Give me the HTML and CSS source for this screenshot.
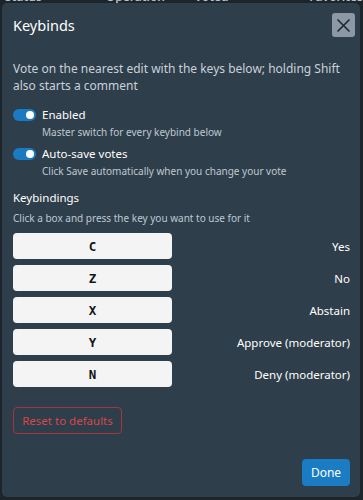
FILE: index.html
```html
<!DOCTYPE html>
<html>
<head>
<meta charset="utf-8">
<link rel="stylesheet" href="styles.css">
</head>
<body>
<div class="page">
  <div class="table-head">
    <span class="th th-status">Status</span>
    <span class="th th-op">Operation</span>
    <span class="th th-voted">Voted</span>
    <span class="th th-fav">Favorites</span>
  </div>
</div>
<div class="dialog">
  <div class="dlg-head">
    <h2 class="dlg-title">Keybinds</h2>
    <button class="close-btn" aria-label="Close">
      <svg width="15" height="15" viewBox="0 0 15 15"><path d="M1.5 1.5 L13.5 13.5 M13.5 1.5 L1.5 13.5" stroke="#1f2830" stroke-width="1.6" fill="none"/></svg>
    </button>
  </div>
  <p class="desc">Vote on the nearest edit with the keys below; holding Shift also starts a comment</p>
  <div class="toggle-row">
    <span class="toggle"><span class="knob"></span></span>
    <div class="toggle-text">
      <div class="toggle-label">Enabled</div>
      <div class="toggle-sub">Master switch for every keybind below</div>
    </div>
  </div>
  <div class="toggle-row second">
    <span class="toggle"><span class="knob"></span></span>
    <div class="toggle-text">
      <div class="toggle-label">Auto-save votes</div>
      <div class="toggle-sub">Click Save automatically when you change your vote</div>
    </div>
  </div>
  <div class="section-title">Keybindings</div>
  <div class="section-sub">Click a box and press the key you want to use for it</div>
  <div class="keys">
    <div class="key-row"><div class="key-box">C</div><span class="key-label">Yes</span></div>
    <div class="key-row"><div class="key-box">Z</div><span class="key-label">No</span></div>
    <div class="key-row"><div class="key-box">X</div><span class="key-label">Abstain</span></div>
    <div class="key-row"><div class="key-box">Y</div><span class="key-label">Approve (moderator)</span></div>
    <div class="key-row"><div class="key-box">N</div><span class="key-label">Deny (moderator)</span></div>
  </div>
  <div class="reset-wrap"><button class="reset-btn">Reset to defaults</button></div>
  <div class="footer"><button class="done-btn">Done</button></div>
</div>
</body>
</html>
```
FILE: styles.css
```css
* { box-sizing: border-box; }
html, body {
  margin: 0;
  padding: 0;
  width: 363px;
  height: 500px;
  overflow: hidden;
  background: #1c242c;
  font-family: "Noto Sans", "Open Sans", sans-serif;
}
.page { position: relative; height: 500px; }
.table-head {
  display: flex;
  margin-top: -11px;
  height: 16px;
  font-size: 12px;
  line-height: 16px;
  color: #b8c0c8;
  font-weight: 600;
}
.th-status { margin-left: 5px; width: 101px; }
.th-op { width: 89px; }
.th-voted { width: 115px; }

.dialog {
  position: absolute;
  left: 2px;
  top: 3px;
  width: 358px;
  height: 494px;
  background: #2f3e4b;
  border-radius: 5px;
  padding: 10px 10px 11px 11px;
  display: flex;
  flex-direction: column;
  color: #ffffff;
}
.dlg-head {
  display: flex;
  justify-content: space-between;
  align-items: center;
  height: 24px;
}
.dlg-title {
  margin: 0;
  font-size: 14.5px;
  font-weight: 400;
  line-height: 24px;
  color: #ffffff;
}
.close-btn {
  width: 23px;
  height: 24px;
  margin-right: -5px;
  padding: 0;
  border: none;
  border-radius: 3px;
  background: #8c98a4;
  display: flex;
  align-items: center;
  justify-content: center;
}
.desc {
  margin: 23px 0 0 0;
  font-size: 12px;
  line-height: 17px;
  color: #c9d1d9;
}
.toggle-row {
  display: flex;
  align-items: flex-start;
  margin-top: 12px;
}
.toggle-row.second { margin-top: 5px; }
.toggle {
  width: 23px;
  height: 12px;
  border-radius: 6px;
  background: #1b7bc2;
  margin-top: 3px;
  margin-right: 6px;
  display: flex;
  align-items: center;
  justify-content: flex-end;
  padding-right: 2px;
  flex-shrink: 0;
}
.knob {
  width: 8px;
  height: 8px;
  border-radius: 50%;
  background: #ffffff;
}
.toggle-label {
  font-size: 11.5px;
  line-height: 18px;
  color: #ffffff;
}
.toggle-sub {
  font-size: 10px;
  line-height: 16px;
  color: #bfc8d0;
}
.section-title {
  margin-top: 10px;
  font-size: 11.5px;
  line-height: 18px;
  color: #ffffff;
}
.section-sub {
  margin-top: 3px;
  font-size: 10px;
  line-height: 16px;
  color: #bfc8d0;
}
.keys {
  margin-top: 7px;
  display: flex;
  flex-direction: column;
  gap: 6px;
}
.key-row {
  display: flex;
  align-items: center;
  justify-content: space-between;
}
.key-box {
  width: 159px;
  height: 26px;
  border-radius: 4px;
  background: #f4f4f4;
  color: #141414;
  font-family: "DejaVu Sans Mono", monospace;
  font-weight: 700;
  font-size: 12.5px;
  display: flex;
  align-items: center;
  justify-content: center;
}
.key-label {
  font-size: 11.5px;
  color: #ffffff;
}
.reset-wrap { margin-top: 20px; }
.reset-btn {
  height: 27px;
  width: 109px;
  border: 1px solid #a8333c;
  border-radius: 4px;
  background: transparent;
  color: #d8464c;
  font-family: "Noto Sans", sans-serif;
  font-size: 11.5px;
  padding: 0;
}
.footer {
  margin-top: auto;
  display: flex;
  justify-content: flex-end;
}
.done-btn {
  width: 48px;
  height: 27px;
  border: none;
  border-radius: 4px;
  background: #1a7cc2;
  color: #ffffff;
  font-family: "Noto Sans", sans-serif;
  font-size: 12px;
  padding: 0;
}
```
